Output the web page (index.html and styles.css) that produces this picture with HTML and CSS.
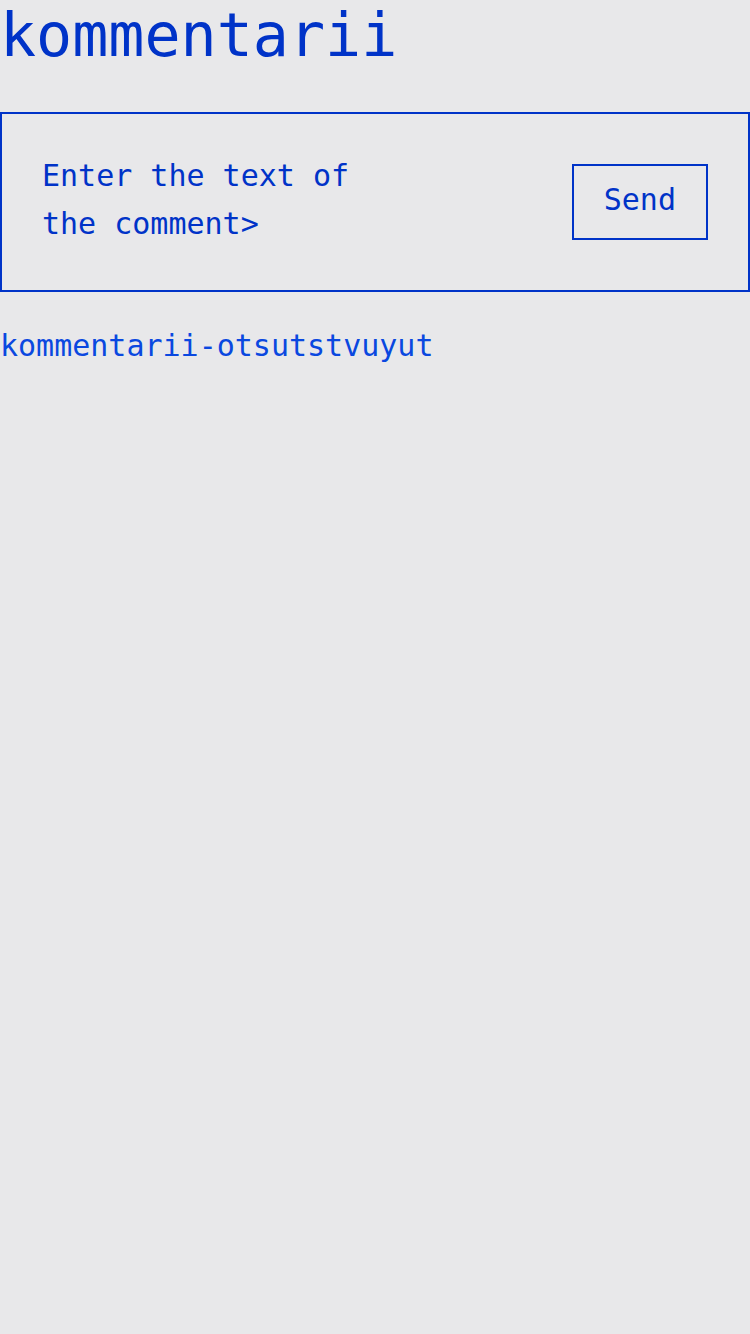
FILE: index.html
```html
<!DOCTYPE html>
<html>
<head>
<meta charset="utf-8">
<link rel="stylesheet" href="styles.css">
</head>
<body>
<h1 class="title">kommentarii</h1>
<div class="composer">
  <div class="field">Enter the text of the comment&gt;</div>
  <button class="send">Send</button>
</div>
<p class="empty">kommentarii-otsutstvuyut</p>
</body>
</html>
```
FILE: styles.css
```css
html, body {
  margin: 0;
  padding: 0;
  background: #e8e8ea;
}
body {
  font-family: "DejaVu Sans Mono", monospace;
  color: #0033c8;
}
.title {
  margin: 0 0 42px 0;
  font-size: 60px;
  font-weight: normal;
  line-height: normal;
  color: #0033c8;
}
.composer {
  display: flex;
  align-items: center;
  justify-content: space-between;
  border: 2px solid #0033c8;
  padding: 40px;
  height: 96px;
}
.field {
  width: 340px;
  font-size: 30px;
  line-height: 48px;
  margin-bottom: 4px;
  color: #0033c8;
}
.send {
  font-family: "DejaVu Sans Mono", monospace;
  font-size: 30px;
  line-height: 36px;
  padding: 16px 30px 20px;
  border: 2px solid #0033c8;
  background: transparent;
  color: #0033c8;
  margin: 0;
}
.empty {
  margin: 30px 0 0 0;
  font-size: 30px;
  line-height: 48px;
  color: #0a48e0;
}
```
